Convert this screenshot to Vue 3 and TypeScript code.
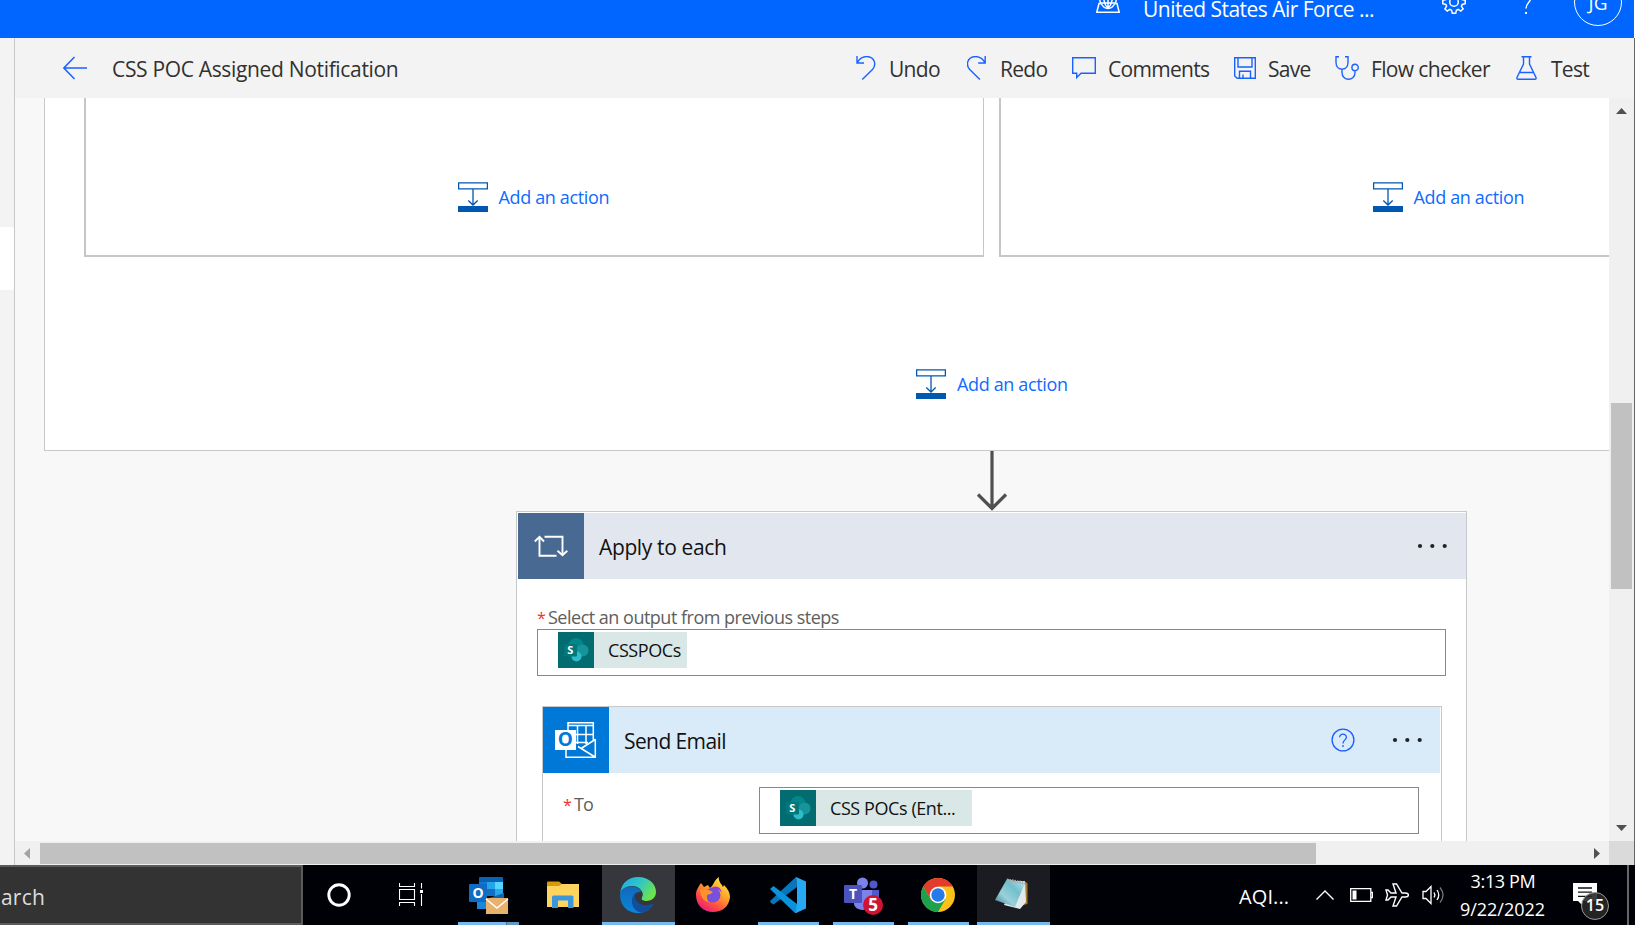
<script setup lang="ts">
interface Command {
  id: string
  label: string
}

const commands: Command[] = [
  { id: 'undo', label: 'Undo' },
  { id: 'redo', label: 'Redo' },
  { id: 'comments', label: 'Comments' },
  { id: 'save', label: 'Save' },
  { id: 'checker', label: 'Flow checker' },
  { id: 'test', label: 'Test' },
]
</script>

<template>
  <div class="screen">
    <header class="topbar">
      <svg class="env-icon" viewBox="0 0 24 24">
        <g fill="none" stroke="#fff" stroke-width="1.5">
          <path d="M4.2 8A9 9 0 0 0 5 15M19.8 8A9 9 0 0 1 19 15M4 8h16M5 14h14M12 2v17.500M8 2c-1.200 5-.5 13 4 17.500M16 2c1.200 5 .5 13-4 17.500" />
          <path d="M5 14.500h-2L.8 23.200h22.400L21 14.500h-2M5.500 15c1.500 3 3.800 4.500 6.500 4.500s5-1.500 6.500-4.500" />
        </g>
      </svg>
      <span class="env-name">United States Air Force ...</span>
      <svg class="gear" viewBox="-12 -12 24 24">
        <path
          d="M-1.700 -11.200H1.700L2.400 -8.200L4.200 -7.400L6.800 -9.100L9.100 -6.800L7.400 -4.200L8.200 -2.400L11.200 -1.700V1.700L8.200 2.400L7.400 4.200L9.100 6.800L6.800 9.100L4.200 7.400L2.400 8.200L1.700 11.200H-1.700L-2.400 8.200L-4.200 7.400L-6.800 9.100L-9.100 6.800L-7.400 4.200L-8.200 2.400L-11.200 1.700V-1.700L-8.200 -2.400L-7.400 -4.200L-9.100 -6.800L-6.800 -9.100L-4.200 -7.400L-2.400 -8.200Z"
          fill="none" stroke="#fff" stroke-width="1.500" />
        <circle r="4.300" fill="none" stroke="#fff" stroke-width="1.500" />
      </svg>
      <svg class="help-top" viewBox="0 0 12 24">
        <path d="M1.500 6.500a4.500 4.500 0 1 1 9 0c0 4-4.500 4.500-4.500 10" fill="none" stroke="#fff" stroke-width="1.500" />
        <rect x="5.100" y="20" width="1.900" height="2" fill="#fff" />
      </svg>
      <div class="avatar"><span>JG</span></div>
    </header>

    <div class="workspace">
      <aside class="rail"><div class="rail-item"></div></aside>
      <main class="editor">
        <div class="commandbar">
          <svg class="back" viewBox="0 0 24 24">
            <path d="M24 12H1.200M11.500 1L.9 12L11.500 23" fill="none" stroke="#1a62ff" stroke-width="1.500" />
          </svg>
          <span class="flow-title">CSS POC Assigned Notification</span>
          <nav class="commands">
            <button v-for="c in commands" :key="c.id" class="command" :class="c.id">
              <svg viewBox="0 0 24 24">
                <g fill="none" stroke="#1a62ff" stroke-width="1.400">
                  <path v-if="c.id === 'undo'" d="M1 0V7H8M1 7C4 1.500 9 .2 12.500 .8C19 2 20.500 9 16.500 13.500L6.300 23.500" />
                  <path v-else-if="c.id === 'redo'" d="M18.200 0V7H11.200M18.200 7C15.200 1.500 10.200 .2 6.700 .8C.2 2-1.300 9 2.700 13.500L12.900 23.500" />
                  <path v-else-if="c.id === 'comments'" d="M.7 1.700H23.300V17.300H9L4.700 21.500V17.300H.7Z" />
                  <path v-else-if="c.id === 'save'" d="M.7 1.700H21.300V22.300H3.200L.7 20ZM4 1.700V11H18V1.700M5.500 22V15.200H16.500V22M9 22V18.500" />
                  <path v-else-if="c.id === 'checker'" d="M4 .7H1V6.500C1 15.300 13 15.300 13 6.500V.7H10M7 13V16.500C7 25.500 20 25.500 20 16.500V14.800M23.300 11.500A3.200 3.200 0 1 1 16.900 11.500A3.200 3.200 0 1 1 23.300 11.500Z" />
                  <path v-else d="M5.500 .7H15.500M7.500 .7V8L1 21.500Q.6 23.300 2 23.300H19Q20.400 23.300 20 21.500L13.500 8V.7M4 16.500H17" />
                </g>
              </svg>
              <span>{{ c.label }}</span>
            </button>
          </nav>
        </div>

        <div class="viewport">
          <div class="canvas">
            <section class="scope">
              <div class="branches">
                <div v-for="n in 2" :key="n" class="branch">
                  <div class="add-action">
                    <svg viewBox="0 0 30 30">
                      <path d="M.6 .8H29.400V6.800H.6ZM15 7V23M10.300 18.500L15 23L19.700 18.500" fill="none" stroke="#0058b0" stroke-width="1.300" />
                      <path d="M0 24H30V30H0Z" fill="#0058b0" />
                    </svg>
                    <span>Add an action</span>
                  </div>
                </div>
              </div>
              <div class="add-action scope-add">
                <svg viewBox="0 0 30 30">
                  <path d="M.6 .8H29.400V6.800H.6ZM15 7V23M10.300 18.500L15 23L19.700 18.500" fill="none" stroke="#0058b0" stroke-width="1.300" />
                  <path d="M0 24H30V30H0Z" fill="#0058b0" />
                </svg>
                <span>Add an action</span>
              </div>
            </section>

            <svg class="connector" viewBox="0 0 32 60">
              <path d="M16 0V57M2 43.500L16 57.500L30 43.500" fill="none" stroke="#505050" stroke-width="3.200" />
            </svg>

            <section class="card apply">
              <div class="card-head">
                <div class="card-icon">
                  <svg width="34" height="24" viewBox="0 0 34 24">
                    <path d="M10.500 2.800H28.500V21M23.500 16.700L28.500 21.300L33.300 16.700M22.500 21.700H5.500V3M.8 7.500L5.500 2.800L10 7.500" fill="none" stroke="#fff" stroke-width="1.900" />
                  </svg>
                </div>
                <h2>Apply to each</h2>
                <svg class="dots" viewBox="0 0 30 6"><circle cx="3" cy="3" r="2.100" /><circle cx="15.300" cy="3" r="2.100" /><circle cx="27.700" cy="3" r="2.100" /></svg>
              </div>
              <div class="apply-body">
                <label><i>*</i>Select an output from previous steps</label>
                <div class="field">
                  <div class="token">
                    <svg viewBox="0 0 36 36">
                      <rect width="36" height="36" fill="#036c70" />
                      <circle cx="18" cy="13.500" r="7.500" fill="#02868a" /><circle cx="24.500" cy="18.500" r="6" fill="#16949a" />
                      <circle cx="18.500" cy="24.500" r="5" fill="#2bbdc8" /><rect x="6" y="12" width="13" height="12.500" rx="1" fill="#03787c" />
                      <text x="12.300" y="22" text-anchor="middle">S</text>
                    </svg>
                    <span>CSSPOCs</span>
                  </div>
                </div>

                <section class="card send">
                  <div class="card-head">
                    <div class="card-icon">
                      <svg width="42" height="38" viewBox="0 0 42 38">
                        <g fill="none" stroke="#fff" stroke-width="1.500">
                          <path d="M13 9V1.700H38.300V20M13 4.500H38.300M20 13.500H38M20 21.500H33M22.500 4.500V23M31 4.500V23M40.300 18V36.200H11V28M40.300 18.500L26 27.500M23 25.500L40 36" />
                        </g>
                        <rect x="0" y="9" width="21" height="20" fill="#fff" />
                        <text class="outlook-o" x="10.300" y="25.300" text-anchor="middle">O</text>
                      </svg>
                    </div>
                    <h2>Send Email</h2>
                    <svg class="help" viewBox="0 0 24 24">
                      <circle cx="12" cy="12" r="10.900" fill="none" stroke="#1a5cff" stroke-width="1.300" />
                      <path d="M8.600 9.300c0-4.200 6.800-4.200 6.800 0c0 2.600-3.400 2.700-3.400 6.200" fill="none" stroke="#1a5cff" stroke-width="1.300" />
                      <rect x="11.200" y="17.200" width="1.600" height="1.600" fill="#1a5cff" />
                    </svg>
                    <svg class="dots" viewBox="0 0 30 6"><circle cx="3" cy="3" r="2.100" /><circle cx="15.300" cy="3" r="2.100" /><circle cx="27.700" cy="3" r="2.100" /></svg>
                  </div>
                  <div class="row">
                    <label><i>*</i>To</label>
                    <div class="field">
                      <div class="token wide">
                        <svg viewBox="0 0 36 36">
                          <rect width="36" height="36" fill="#036c70" />
                          <circle cx="18" cy="13.500" r="7.500" fill="#02868a" /><circle cx="24.500" cy="18.500" r="6" fill="#16949a" />
                          <circle cx="18.500" cy="24.500" r="5" fill="#2bbdc8" /><rect x="6" y="12" width="13" height="12.500" rx="1" fill="#03787c" />
                          <text x="12.300" y="22" text-anchor="middle">S</text>
                        </svg>
                        <span>CSS POCs (Ent...</span>
                      </div>
                    </div>
                  </div>
                </section>
              </div>
            </section>
          </div>
          <div class="vscroll">
            <svg viewBox="0 0 11 6"><path d="M5.500 0L11 6H0Z" fill="#505050" /></svg>
            <div class="vthumb"></div>
            <svg viewBox="0 0 11 6"><path d="M0 0H11L5.500 6Z" fill="#505050" /></svg>
          </div>
          <div class="hscroll">
            <svg viewBox="0 0 6 11"><path d="M6 0V11L0 5.500Z" fill="#a3a3a3" /></svg>
            <div class="hthumb"></div>
            <svg viewBox="0 0 6 11"><path d="M0 0V11L6 5.500Z" fill="#505050" /></svg>
          </div>
          <div class="corner"></div>
        </div>
      </main>
      <div class="edge"></div>
    </div>

    <footer class="taskbar">
      <div class="search"><span>arch</span></div>
      <div class="task cortana">
        <svg viewBox="0 0 24 24"><circle cx="12" cy="12" r="10.200" fill="none" stroke="#fff" stroke-width="2.900" /></svg>
      </div>
      <div class="task view">
        <svg viewBox="0 0 25 24">
          <path d="M.5 0V3.500H15.500V0M.5 6.500H15.500V16.500H.5ZM.5 23V19.500H15.500V23M22.500 0V5.500M22.500 11V23" fill="none" stroke="#fff" stroke-width="1.100" />
          <rect x="21" y="7" width="3" height="3" fill="#fff" />
        </svg>
      </div>
      <div class="task app outlook">
        <svg width="40" height="38" viewBox="0 0 40 38">
          <path d="M10 2Q10 1 11 1H33Q34 1 34 2V12H10Z" fill="#0a62b4" /><path d="M10 6H18V17H10Z" fill="#1576c8" />
          <path d="M18 6H26V13H18Z" fill="#27a4e8" /><path d="M26 6H34V13H26Z" fill="#55d6ff" /><path d="M18 13H26V20H18Z" fill="#0f70c4" /><path d="M26 13H34V20H26Z" fill="#28a8ea" />
          <path d="M8 17L22 24L35 17V33H8Z" fill="#1789dd" /><path d="M20 22L35 17V24H20Z" fill="#1262ae" />
          <rect y="8" width="18" height="18" rx="1" fill="#0f6cc4" />
          <text class="app-letter" x="9" y="22" text-anchor="middle">O</text>
          <rect x="17" y="22" width="22" height="16" fill="#e8b26c" /><path d="M17 23L28 32L39 23" fill="none" stroke="#fff" stroke-width="1.600" />
        </svg>
      </div>
      <div class="task app explorer">
        <svg width="34" height="28" viewBox="0 0 34 28">
          <path d="M1 1.500Q1 .5 2 .5H13L16 3H33V26H1Z" fill="#d99a06" /><path d="M1 5H13L16 3H33V26H1Z" fill="#ffd45e" />
          <path d="M6 26V16Q6 14.500 7.500 14.500H26Q27.500 14.500 27.500 16V27H22V19.500H12V27H6Z" fill="#3a97dc" />
        </svg>
      </div>
      <div class="task app edge-app active">
        <svg width="36" height="36" viewBox="0 0 36 36">
          <defs>
            <linearGradient id="eg" x1="0" y1="0" x2="1" y2=".5"><stop offset="0" stop-color="#25a7e0" /><stop offset=".5" stop-color="#2cc3cf" /><stop offset="1" stop-color="#6be34f" /></linearGradient>
            <linearGradient id="eb" x1="0" y1="0" x2="0" y2="1"><stop offset="0" stop-color="#1268b8" /><stop offset="1" stop-color="#0a86dd" /></linearGradient>
          </defs>
          <path d="M0 16C2 5 9 0 18 0C29 0 36 7 36 15C36 21 31 24 27 24C22 24 20.500 22.500 22 20C24 16 21 10 13 9C7 8.500 2 12 0 16Z" fill="url(#eg)" />
          <path d="M0 18C0 12 6 9 12 9.500C18 10 22 13 21.500 16C14 14 12 21 16 27C20 32 26 32 31 30C28 34 23 36 18 36C7 36 0 28 0 18Z" fill="url(#eb)" />
          <path d="M18 14.500C9 18 10 33 21 35.700C27 35 31 32 33.500 27.500C34 26.500 33 26.500 32 27C26 30 18 28 15.500 21C14.500 18 15.500 16 18 14.500Z" fill="#104f9e" />
          <path d="M21.700 14.500C16 15 13.500 18 15.500 21.500C18 28 26 29.500 32.500 26.700L35.500 20C33 23 30 24 27 24C22 24 20.500 22.500 22 20C23 18 22.500 16 21.700 14.500Z" fill="#36373c" />
        </svg>
      </div>
      <div class="task app firefox">
        <svg width="34" height="36" viewBox="0 0 34 36">
          <defs>
            <linearGradient id="fx" x1=".85" y1="0" x2=".2" y2="1"><stop offset="0" stop-color="#fff24a" /><stop offset=".4" stop-color="#ffa52a" /><stop offset=".72" stop-color="#ff4b42" /><stop offset="1" stop-color="#e3178a" /></linearGradient>
          </defs>
          <path d="M5 6L8 10L12 8L14 11C18 8 18 3 23 0C22 4 25 6 27 10L28 8C32 12 34 16 34 20C33 30 26 35 17 35C7 35 0 28 0 18C0 13 2 11 3 9Z" fill="url(#fx)" />
          <circle cx="17" cy="18" r="7.500" fill="#7650df" /><path d="M17 10Q24 8 26 16Q21 9 14 14Z" fill="#9a3fd6" />
          <path d="M4 13Q11 11 17 15Q14 18 11 18Q10 23 14 26Q5 24 4 13Z" fill="#ff922b" />
        </svg>
      </div>
      <div class="task app vscode">
        <svg width="36" height="36" viewBox="0 0 36 36">
          <path d="M26 0L0 24L1 26L3.500 27.500L27 10Z" fill="#0876bd" /><path d="M0 12L3.500 9L27 27V36H25Z" fill="#0b92dc" /><path d="M26 0L36 4.500V31.500L26 36L27 26V10Z" fill="#28a9f3" />
        </svg>
      </div>
      <div class="task app teams">
        <svg width="40" height="38" viewBox="0 0 40 38">
          <circle cx="18.500" cy="6" r="5.500" fill="#7b83eb" /><circle cx="29.500" cy="7.500" r="4" fill="#5059c9" /><path d="M24 13H35V25H24Z" fill="#5059c9" />
          <path d="M10 13H28V27A9 6 0 0 1 10 27Z" fill="#7b83eb" /><rect y="8" width="18" height="18" rx="1" fill="#4b53bc" />
          <text class="app-letter teams-t" x="9" y="22" text-anchor="middle">T</text>
          <circle cx="29" cy="28" r="10" fill="#d01335" /><text class="app-letter teams-n" x="29" y="34" text-anchor="middle">5</text>
        </svg>
      </div>
      <div class="task app chrome">
        <svg width="34" height="34" viewBox="-17 -17 34 34">
          <circle r="17" fill="#fbc116" /><path d="M0 -8.500H14.700A17 17 0 0 0 -14.700 -8.500L-7.400 4.200Z" fill="#e33b2e" />
          <path d="M-14.700 -8.500A17 17 0 0 0 0 17L7.400 4.200L-7.400 4.200Z" fill="#1fa04a" /><circle r="8.300" fill="#fff" /><circle r="6.700" fill="#267ae9" />
        </svg>
      </div>
      <div class="task app notepad">
        <svg width="34" height="32" viewBox="0 0 34 32">
          <path d="M28 3L32.500 5V26L28 27Z" fill="#a67c2c" /><path d="M20 3H30L31 24L25 31L9 27Z" fill="#e2e9eb" />
          <defs><linearGradient id="np" x1="0" y1="1" x2="1" y2="0"><stop offset="0" stop-color="#2c7890" /><stop offset=".35" stop-color="#9bd0d9" /><stop offset=".65" stop-color="#70bfce" /><stop offset="1" stop-color="#cae9ee" /></linearGradient></defs>
          <path d="M12 1L30 5L20 29L0 22Z" fill="url(#np)" /><path d="M12 2L30 5" stroke="#aaa" stroke-width="3" stroke-dasharray="1.500 1" />
        </svg>
      </div>

      <div class="tray">
        <span class="aqi">AQI...</span>
        <svg class="chev" viewBox="0 0 18 10"><path d="M.5 9.500L9 1L17.500 9.500" fill="none" stroke="#fff" stroke-width="1.400" /></svg>
        <svg class="battery" viewBox="0 0 23 14"><path d="M.7 .7H20.800V13.300H.7ZM21 4.500H22.500V9.500H21" fill="none" stroke="#fff" stroke-width="1.300" /><rect x="2.500" y="2.500" width="4" height="9" fill="#fff" /></svg>
        <svg class="plane" viewBox="0 0 24 24"><path d="M1 7H3L6 10H11L8 1H11.500L17 10H20.500C24.500 10.500 24.500 13.500 20.500 14H17L11.500 23H8L11 14H6L3 17H1L2.500 12Z" fill="none" stroke="#fff" stroke-width="1.400" /></svg>
        <svg class="speaker" viewBox="0 0 23 20"><g fill="none" stroke="#fff" stroke-width="1.300"><path d="M1 6.500H4L9 1.500V18.500L4 13.500H1Z" /><path d="M12 7.500Q13.700 10 12 12.500" /><path d="M15 5Q18.500 10 15 15" /><path d="M18 2.500Q24 10 18 17.500" stroke="#777" /></g></svg>
        <div class="clock"><span class="time">3:13 PM</span><span class="date">9/22/2022</span></div>
        <div class="notice">
          <svg viewBox="0 0 24 22"><path d="M0 0H24V18H9V22L5 18H0Z" fill="#fff" /><path d="M5 5H19M5 9.200H19M5 13.400H19" stroke="#111" stroke-width="1.300" /></svg>
          <b>15</b>
        </div>
        <div class="peek"></div>
      </div>
    </footer>
  </div>
</template>

<style>
html, body { margin: 0; overflow: hidden; }
</style>

<style scoped>
* { box-sizing: border-box; }
svg { display: block; flex: none; }
.screen { width: 1635px; height: 925px; overflow: hidden; display: flex; flex-direction: column; font-family: "Open Sans", "Noto Sans", sans-serif; font-size: 21px; color: #323130; }
.topbar { height: 38px; flex: none; width: 1634px; background: #0066ff; display: flex; overflow: hidden; color: #fff; }
.env-icon { width: 24px; height: 24px; margin: -11px 0 0 1096px; }
.env-name { flex: none; width: 232px; margin-left: 23px; margin-top: -6px; line-height: 30px; white-space: nowrap; letter-spacing: -0.52px; }
.gear { width: 24px; height: 24px; margin: -10px 0 0 67px; }
.help-top { width: 12px; height: 24px; margin: -8px 0 0 54px; }
.avatar { width: 48px; height: 48px; margin: -22px 0 0 42px; border: 1px solid #fff; border-radius: 50%; display: flex; justify-content: center; flex: none; }
.avatar span { font-size: 19px; line-height: 26px; margin-top: 11px; }
.workspace { display: flex; height: 827px; flex: none; }
.rail { width: 15px; border-right: 1px solid #c8c8c8; background: #f3f3f3; padding-top: 189px; }
.rail-item { width: 14px; height: 63px; background: #fff; border-radius: 0 2px 2px 0; }
.editor { width: 1619px; }
.edge { width: 1px; background: #666; }
.commandbar { height: 60px; background: #f3f3f3; display: flex; align-items: center; }
.back { width: 24px; height: 24px; margin-left: 48px; }
.flow-title { width: 744px; margin-left: 25px; padding-top: 2px; white-space: nowrap; letter-spacing: -0.33px; }
.commands { display: grid; grid-template-columns: 111px 105px 162px 101px 181px 90px; }
.command { border: 0; background: none; padding: 0; display: flex; align-items: center; font: inherit; color: inherit; white-space: nowrap; letter-spacing: -0.7px; }
.command svg { width: 24px; height: 24px; margin-right: 9px; }
.command span { padding-top: 2px; }
.comments svg { margin-right: 12px; }
.save svg { margin-right: 10px; }
.checker svg { margin-right: 12px; }
.command.test svg { margin-right: 11px; }
.checker { letter-spacing: -0.65px; }
.viewport { display: grid; grid-template-columns: 1594px 25px; grid-template-rows: 743px 24px; }
.canvas { background: #f8f8f8; overflow: hidden; display: flex; flex-direction: column; padding-left: 29px; }
.scope { width: 1896px; height: 353px; flex: none; background: #fff; border: 1px solid #c8c8c8; border-top: 0; }
.branches { display: flex; gap: 15px; padding-left: 39px; }
.branch { width: 900px; height: 159px; flex: none; border: solid #c8c6c4; border-width: 0 1px 2px 2px; padding-top: 84px; }
.add-action { display: flex; align-items: center; width: 152px; height: 30px; margin: 0 auto; color: #0f6bff; font-size: 18px; white-space: nowrap; letter-spacing: -0.36px; }
.branch .add-action { width: 154px; }
.add-action svg { width: 30px; height: 30px; margin-right: 11px; }
.scope-add { margin-top: 112px; }
.connector { width: 32px; height: 60px; margin-left: 932px; }
.card { background: #fff; border: 1px solid #c8c8c8; }
.apply { width: 951px; height: 500px; flex: none; margin-left: 472px; padding-top: 1px; }
.card-head { display: flex; align-items: center; height: 66px; color: #111; }
.apply > .card-head { background: #e2e7ef; margin-left: 1px; }
.card-icon { width: 66px; height: 66px; display: flex; align-items: center; justify-content: center; background: #486991; flex: none; }
h2 { font-size: 21px; line-height: 30px; font-weight: 400; margin: 1px 0 0 15px; flex: 1; white-space: nowrap; letter-spacing: -0.37px; }
.send h2 { letter-spacing: -0.6px; }
.dots { width: 30px; height: 6px; margin: -1px 19px 0 0; fill: #222; }
.apply-body { padding: 24px 20px 0; }
label { display: block; font-size: 18px; line-height: 28px; height: 26px; color: #605e5c; white-space: nowrap; letter-spacing: -0.5px; }
label i { color: #f0322c; font-style: normal; font-size: 16px; display: inline-block; width: 11px; }
.field { height: 47px; border: 1px solid #8a8886; background: #fff; padding: 2px 0 0 20px; }
.token { width: 129px; height: 36px; background: #d9e8e7; display: flex; align-items: center; font-size: 18px; color: #111; white-space: nowrap; letter-spacing: -0.42px; }
.token.wide { width: 192px; }
.token svg { width: 36px; height: 36px; margin-right: 14px; }
.token text { font: 700 11px "Open Sans", sans-serif; letter-spacing: 0; fill: #fff; }
.send { width: 900px; height: 300px; margin: 30px 0 0 5px; }
.send .card-head { background: #d9eaf8; margin-right: 1px; }
.send .card-icon { background: #0078d7; }
.send .card-icon svg { margin-right: 1px; }
.send .dots { margin-right: 18px; }
.outlook-o { font: 700 19px "Open Sans", sans-serif; fill: #0078d7; }
.help { width: 24px; height: 24px; margin: -1px 37px 0 0; }
.row { display: flex; padding: 14px 0 0 20px; }
.row label { width: 196px; margin-top: 3px; letter-spacing: -1px; }
.row .field { width: 660px; }
.vscroll { background: #f0f0f0; display: flex; flex-direction: column; align-items: center; padding-top: 10px; }
.vscroll svg { width: 11px; height: 6px; }
.vthumb { width: 21px; height: 186px; margin: 289px 0 236px; background: #c1c1c1; }
.hscroll { background: #f0f0f0; display: flex; align-items: center; padding-left: 9px; }
.hscroll svg { width: 6px; height: 11px; }
.hthumb { width: 1276px; height: 21px; margin: 0 278px 0 10px; background: #c1c1c1; }
.corner { background: #dadada; }
.taskbar { height: 60px; flex: none; background: #000007; display: flex; color: #fff; }
.search { width: 303px; height: 60px; border: 2px solid #5b5b5b; border-left: 0; background: #333; color: #ddd; display: flex; align-items: center; flex: none; }
.search span { margin: 4px 0 0 1px; letter-spacing: 0.2px; }
.task { height: 60px; flex: none; display: flex; align-items: center; justify-content: center; }
.cortana { width: 72px; }
.cortana svg { width: 24px; height: 24px; }
.view { width: 83px; justify-content: flex-start; padding-left: 34px; }
.view svg { width: 25px; height: 24px; margin-left: -10px; }
.app { border-bottom: 3px solid transparent; width: 61px; }
.outlook { border-image: linear-gradient(90deg, #76b9ed 0 78%, #47749a 78% 80%, #6297c0 80%) 1; padding-left: 1px; border-width: 0 0 3px; }
.outlook svg { margin-top: 3px; }
.explorer { width: 83px; }
.explorer svg { margin-left: 5px; margin-top: 3px; }
.edge-app { width: 73px; padding-right: 1px; }
.active { background: #36373c; border-bottom-color: #76b9ed; }
.edge-app svg, .firefox svg, .vscode svg { margin-top: 2px; }
.firefox { width: 83px; padding-right: 7px; }
.vscode, .teams, .chrome { border-bottom-color: #76b9ed; margin-right: 14px; padding-right: 1px; }
.teams { padding-right: 0; }
.teams svg { margin-top: 5px; }
.chrome { margin-right: 8px; padding-right: 2px; }
.chrome svg { margin-top: 2px; }
.notepad { width: 73px; padding-right: 3px; background: #1b1c21; border-bottom-color: #76b9ed; }
.notepad svg { margin-top: 1px; }
.app-letter { font: 700 14px "Open Sans", sans-serif; fill: #fff; }
.teams-n { font-size: 17px; }
.tray { display: flex; flex: none; align-items: center; margin-left: 189px; width: 396px; }
.aqi { width: 77px; font-size: 20px; margin-top: 3px; letter-spacing: 0.1px; }
.chev { width: 18px; height: 10px; }
.battery { width: 23px; height: 14px; margin-left: 16px; }
.plane { width: 24px; height: 24px; margin-left: 12px; }
.speaker { width: 23px; height: 20px; margin-left: 13px; }
.clock { width: 116px; display: flex; flex-direction: column; align-items: center; font-size: 18px; line-height: 28px; white-space: nowrap; letter-spacing: -0.35px; }
.date { letter-spacing: 0; margin-left: -1px; }
.notice { width: 54px; height: 60px; padding: 18px 0 0 12px; position: relative; }
.notice svg { width: 24px; height: 22px; }
.notice b { position: absolute; left: 20px; top: 27px; width: 28px; height: 28px; border: 1px solid #999; border-radius: 50%; background: rgba(40, 40, 40, 0.9); font-size: 16px; font-weight: 600; line-height: 25px; text-align: center; }
.peek { width: 2px; height: 60px; background: #666; margin-left: 12px; }
</style>
